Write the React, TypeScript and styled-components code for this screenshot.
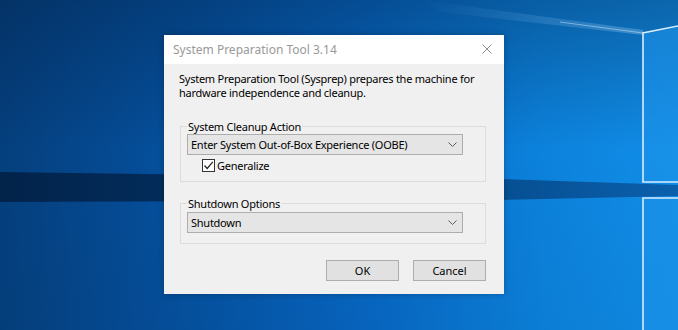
import styled, { createGlobalStyle } from "styled-components";

const GlobalStyle = createGlobalStyle`
  html, body {
    margin: 0;
    padding: 0;
  }
  body {
    font-family: "Noto Sans", "DejaVu Sans", sans-serif;
  }
`;

const Wallpaper = () => (
  <WallpaperSvg viewBox="0 0 678 330" preserveAspectRatio="none">
    <defs>
      <linearGradient id="base" x1="0" y1="0" x2="1" y2="0">
        <stop offset="0" stopColor="#053f7d" />
        <stop offset="0.3" stopColor="#0553a3" />
        <stop offset="0.55" stopColor="#0768c4" />
        <stop offset="0.8" stopColor="#0c82dc" />
        <stop offset="1" stopColor="#118ee8" />
      </linearGradient>
      <linearGradient id="shade" x1="0" y1="0" x2="0" y2="1">
        <stop offset="0" stopColor="#021c3d" stopOpacity="0.35" />
        <stop offset="0.45" stopColor="#021c3d" stopOpacity="0" />
        <stop offset="1" stopColor="#021c3d" stopOpacity="0.05" />
      </linearGradient>
      <linearGradient id="band" x1="0" y1="0" x2="1" y2="0">
        <stop offset="0" stopColor="#02234a" />
        <stop offset="0.3" stopColor="#032e5e" />
        <stop offset="0.7" stopColor="#064c8e" />
        <stop offset="1" stopColor="#0a60ad" />
      </linearGradient>
      <linearGradient id="beam" x1="0" y1="0" x2="1" y2="0">
        <stop offset="0" stopColor="#7fc4ff" stopOpacity="0" />
        <stop offset="1" stopColor="#bfe3ff" stopOpacity="0.7" />
      </linearGradient>
    </defs>
    <rect width="678" height="330" fill="url(#base)" />
    <rect width="678" height="330" fill="url(#shade)" />
    <polygon points="0,172 500,179 678,185 678,196 500,200 0,202" fill="url(#band)" />
    <polygon points="643,34 678,27 678,182 643,182" fill="#1c93ea" opacity="0.6" />
    <polygon points="643,198 678,198 678,330 643,330" fill="#1c93ea" opacity="0.6" />
    <polygon points="420,0 643,30 643,35 440,12" fill="url(#beam)" opacity="0.4" />
    <g stroke="#d6edff" strokeWidth="1.6" fill="none">
      <polyline points="678,182 643,182 643,33 678,26" />
      <polyline points="678,198 643,198 643,330" />
    </g>
    <polyline points="560,22 643,33" stroke="#c9e7ff" strokeWidth="1" opacity="0.5" fill="none" />
  </WallpaperSvg>
);

const CloseIcon = () => (
  <svg width="10" height="10" viewBox="0 0 10 10">
    <path d="M0.5 0.5 L9.5 9.5 M9.5 0.5 L0.5 9.5" stroke="#8c8c8c" strokeWidth="1" fill="none" />
  </svg>
);

const Chevron = () => (
  <svg width="9" height="5" viewBox="0 0 9 5">
    <path d="M0.5 0.5 L4.5 4.5 L8.5 0.5" stroke="#5a5a5a" strokeWidth="1" fill="none" />
  </svg>
);

const CheckMark = () => (
  <svg width="11" height="11" viewBox="0 0 11 11">
    <path d="M1.5 5.5 L4.2 8.5 L9.8 1.8" stroke="#222" strokeWidth="1.2" fill="none" />
  </svg>
);

const App = () => {
  return (
    <Desktop>
      <GlobalStyle />
      <Wallpaper />
      <Dialog>
        <TitleBar>
          <Title>System Preparation Tool 3.14</Title>
          <CloseButton>
            <CloseIcon />
          </CloseButton>
        </TitleBar>
        <Body>
          <Description>
            System Preparation Tool (Sysprep) prepares the machine for
            <br />
            hardware independence and cleanup.
          </Description>

          <Group $top={1} $bottom={9}>
            <Legend>System Cleanup Action</Legend>
            <Combo>
              <span>Enter System Out-of-Box Experience (OOBE)</span>
              <Chevron />
            </Combo>
            <CheckRow>
              <CheckBox>
                <CheckMark />
              </CheckBox>
              <span>Generalize</span>
            </CheckRow>
          </Group>

          <Group $spaced $top={2} $bottom={10}>
            <Legend>Shutdown Options</Legend>
            <Combo>
              <span>Shutdown</span>
              <Chevron />
            </Combo>
          </Group>

          <ButtonRow>
            <Button>OK</Button>
            <Button>Cancel</Button>
          </ButtonRow>
        </Body>
      </Dialog>
    </Desktop>
  );
};

const Desktop = styled.div`
  position: relative;
  width: 678px;
  height: 330px;
  overflow: hidden;
  box-sizing: border-box;
  padding: 35px 0 0 164px;
  font-size: 11px;
  letter-spacing: -0.25px;
  color: #000;
`;

const WallpaperSvg = styled.svg`
  position: absolute;
  left: 0;
  top: 0;
  width: 678px;
  height: 330px;
  z-index: 0;
`;

const Dialog = styled.div`
  position: relative;
  z-index: 1;
  width: 340px;
  background: #f0f0f0;
  box-shadow: 0 0 6px rgba(0, 0, 0, 0.25);
`;

const TitleBar = styled.div`
  display: flex;
  align-items: center;
  justify-content: space-between;
  height: 29px;
  padding: 0 12px 0 9px;
  background: #fff;
`;

const Title = styled.span`
  font-size: 12px;
  letter-spacing: 0;
  color: #999;
`;

const CloseButton = styled.span`
  display: flex;
  margin-top: -1px;
`;

const Body = styled.div`
  display: flex;
  flex-direction: column;
  padding: 8px 18px 13px 16px;
`;

const Description = styled.p`
  margin: 0 0 20px -1px;
  line-height: 14px;
  white-space: nowrap;
`;

const Group = styled.fieldset<{ $spaced?: boolean; $top: number; $bottom: number }>`
  margin: ${(p) => (p.$spaced ? "15px" : "0")} 0 0 0;
  padding: ${(p) => p.$top}px 6px ${(p) => p.$bottom}px 6px;
  border: 1px solid #dcdcdc;
  min-width: 0;
`;

const Legend = styled.legend`
  padding: 0 1px;
  line-height: 13px;
`;

const Combo = styled.div`
  display: flex;
  align-items: center;
  justify-content: space-between;
  width: 276px;
  height: 21px;
  box-sizing: border-box;
  padding: 0 5px 0 3px;
  background: #e5e5e5;
  border: 1px solid #adadad;
  line-height: 13px;
`;

const CheckRow = styled.div`
  display: flex;
  align-items: center;
  gap: 2px;
  margin: 4px 0 0 15px;
  line-height: 13px;
`;

const CheckBox = styled.span`
  display: flex;
  align-items: center;
  justify-content: center;
  width: 13px;
  height: 13px;
  box-sizing: border-box;
  background: #fff;
  border: 1px solid #333;
`;

const ButtonRow = styled.div`
  display: flex;
  justify-content: flex-end;
  gap: 14px;
  margin-top: 16px;
`;

const Button = styled.button`
  width: 73px;
  height: 21px;
  padding: 0;
  font-family: inherit;
  font-size: 11px;
  color: #000;
  background: #e1e1e1;
  border: 1px solid #adadad;
`;

export default App;
